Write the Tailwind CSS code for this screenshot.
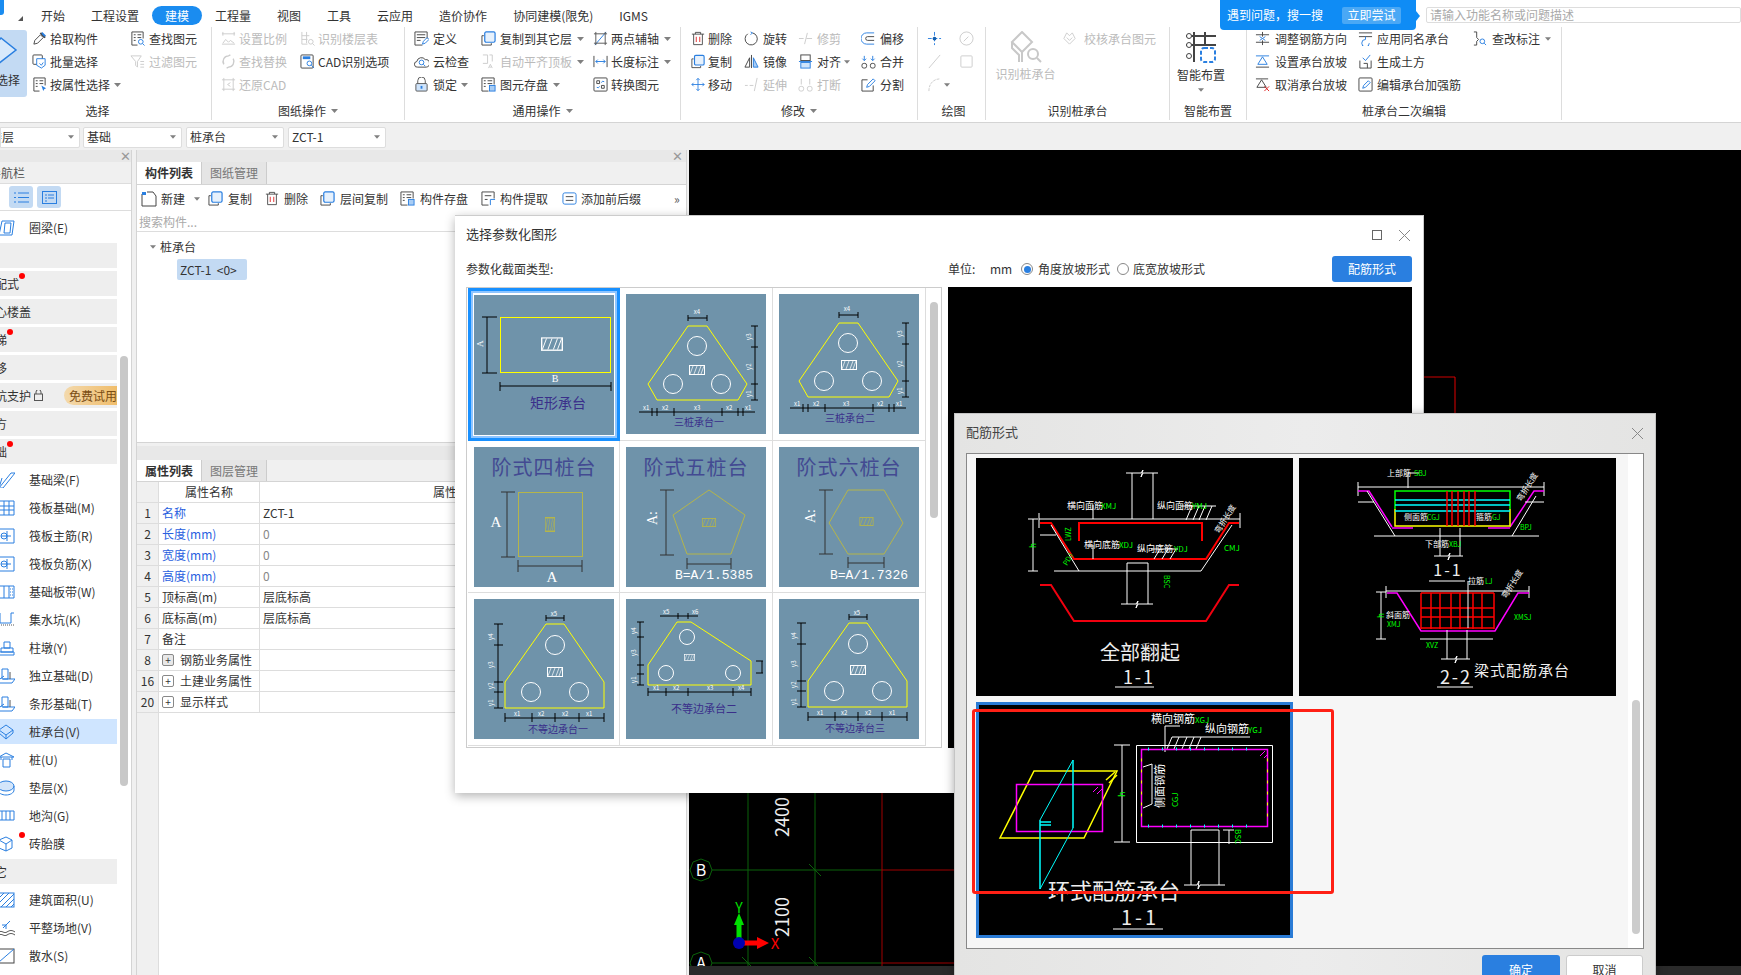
<!DOCTYPE html>
<html lang="zh-CN">
<head>
<meta charset="UTF-8">
<title>选择参数化图形</title>
<script src="https://cdn.jsdelivr.net/npm/@tailwindcss/browser@4"></script>
</head>
<body class="relative w-[1741px] h-[975px] overflow-hidden bg-[#f0f0f0] text-[12px] leading-none text-[#333] font-['Noto_Sans_CJK_SC','Liberation_Sans',sans-serif]">

<!-- 图标 -->
<svg class="absolute w-0 h-0">
  <symbol id="caret" viewBox="0 0 7 4"><path d="M0 0h7L3.500 4z" fill="#808080"/></symbol>
  <symbol id="hatch" viewBox="0 0 16 10"><rect x=".5" y=".5" width="15" height="9" fill="none" stroke="currentColor"/><path d="M1 9l3-8M5 9l3-8M9 9l3-8M12 9l3-8" stroke="currentColor" fill="none" stroke-width=".7"/></symbol>
  <symbol id="find" viewBox="0 0 16 16" fill="none"><path d="M8 15H2V1h12v7" stroke="currentColor"/><path d="M4 4h2M8 4h4M4 7h2M8 7h4M4 10h2" stroke="currentColor"/><circle cx="11.500" cy="11.500" r="2.500" stroke="#2a7fe0"/><path d="M13.500 13.500L15.500 15.500" stroke="#2a7fe0"/></symbol>
  <symbol id="pick" viewBox="0 0 16 16" fill="none"><path d="M2 14l1-4 6-6 3 3-6 6z" stroke="currentColor"/><path d="M9 2l5 5" stroke="#444" stroke-width="2"/><path d="M11 1l4 4-2 1-3-3z" fill="#2a7fe0"/></symbol>
  <symbol id="batch" viewBox="0 0 16 16" fill="none"><rect x="1" y="1" width="10" height="10" rx="1" stroke="currentColor"/><path d="M5 5h9v7l-4 3-5-3z" stroke="#2a7fe0" fill="#fff"/><path d="M8 10l2 2 2-3" stroke="#2a7fe0"/></symbol>
  <symbol id="attr" viewBox="0 0 16 16" fill="none"><path d="M8 15H2V1h12v8" stroke="currentColor"/><path d="M4 4h2M8 4h4M4 7h2M8 7h4M4 10h2" stroke="currentColor"/><path d="M10 9l5 3-2 1-1 2z" fill="#2a7fe0"/></symbol>
  <symbol id="filter" viewBox="0 0 16 16" fill="none"><path d="M1 2h11L8 8v6L6 12V8z" stroke="currentColor"/><path d="M11 8h4M11 11h4M11 14h4" stroke="currentColor"/></symbol>
  <symbol id="scale" viewBox="0 0 16 16" fill="none"><path d="M1 3h14M1 14h14M2 1v4M14 1v4" stroke="currentColor"/><path d="M2 13l3-4 3 3 2-2 4 3" stroke="currentColor"/></symbol>
  <symbol id="floor" viewBox="0 0 16 16" fill="none"><path d="M2 1v13h6M2 5h8M2 9h6M7 1v12" stroke="currentColor"/><circle cx="11.500" cy="11.500" r="2.500" stroke="currentColor"/><path d="M13.500 13.500L15.500 15.500" stroke="currentColor"/></symbol>
  <symbol id="replace" viewBox="0 0 16 16" fill="none"><path d="M3 11A6 6 0 0 1 8 2l2-1M13 5a6 6 0 0 1-5 9l-2 1" stroke="currentColor" stroke-width="1.500"/></symbol>
  <symbol id="restore" viewBox="0 0 16 16" fill="none"><path d="M1 3h14M1 13h14M3 1v14M13 1v14" stroke="currentColor"/><path d="M10 6L7 8l3 2" stroke="currentColor"/></symbol>
  <symbol id="cad" viewBox="0 0 16 16" fill="none"><rect x="1" y="1" width="13" height="14" rx="1" stroke="currentColor"/><path d="M3 4h8" stroke="#2a7fe0" stroke-width="3"/><circle cx="10" cy="10" r="2.500" stroke="#2a7fe0"/><path d="M12 12l3 3" stroke="#2a7fe0"/></symbol>
  <symbol id="define" viewBox="0 0 16 16" fill="none"><path d="M9 15H1V1h13v7" stroke="currentColor"/><path d="M3 4h9M3 7h9M3 10h4" stroke="currentColor"/><path d="M9 14l1-3 4-4 2 2-4 4z" stroke="#2a7fe0"/></symbol>
  <symbol id="cloud" viewBox="0 0 16 16" fill="none"><path d="M4 14a3 3 0 0 1-1-6 5 5 0 0 1 9-2 4 4 0 0 1 1 8z" stroke="currentColor"/><circle cx="8" cy="9" r="2.500" stroke="#2a7fe0"/><path d="M10 11l2 2" stroke="#2a7fe0"/></symbol>
  <symbol id="lock" viewBox="0 0 16 16" fill="none"><path d="M4 7V4a4 4 0 0 1 8 0v3" stroke="currentColor"/><rect x="2" y="7" width="12" height="8" rx="1" fill="#cfe4fb" stroke="#555"/><path d="M8 9.500v3" stroke="#2a7fe0" stroke-width="2"/></symbol>
  <symbol id="copy" viewBox="0 0 16 16" fill="none"><path d="M3 5H1v10h10v-2" stroke="currentColor"/><rect x="4" y="1" width="11" height="11" rx="1.500" fill="#e7f1fc" stroke="#2a7fe0" stroke-width="1.300"/></symbol>
  <symbol id="auto" viewBox="0 0 16 16" fill="none"><path d="M2 1h5v9H2M9 1h3v7" stroke="currentColor"/><path d="M8 15l2-4 2 4M9 14h2" stroke="currentColor"/></symbol>
  <symbol id="save" viewBox="0 0 16 16" fill="none"><path d="M8 15H1V1h13v7" stroke="currentColor"/><path d="M3 4h2M7 4h5M3 7h2M7 7h5M3 10h2" stroke="currentColor"/><rect x="9" y="9" width="6" height="6" fill="#a9cdf4" stroke="#2a7fe0"/></symbol>
  <symbol id="axis" viewBox="0 0 16 16" fill="none"><path d="M2 15L14 1" stroke="#2a7fe0"/><path d="M1 3h14M1 13h14M3 1v14M13 1v14" stroke="#555"/></symbol>
  <symbol id="dim" viewBox="0 0 16 16" fill="none"><path d="M1 2v12M15 2v12" stroke="#444"/><path d="M3 8h10M3 8l2-2M3 8l2 2M13 8l-2-2M13 8l-2 2" stroke="#2a7fe0"/></symbol>
  <symbol id="convert" viewBox="0 0 16 16" fill="none"><rect x="1" y="1" width="14" height="14" rx="1" stroke="currentColor"/><path d="M4 4h3v3H4zM9 9h3v3H9z" stroke="#444"/><path d="M9 6a2 2 0 0 1 3-1M7 10a2 2 0 0 1-3 1" stroke="#2a7fe0"/></symbol>
  <symbol id="del" viewBox="0 0 16 16" fill="none"><path d="M1 3h14M5 3V1h6v2M3 3v12h10V3" stroke="currentColor"/><path d="M6 6v6M10 6v6" stroke="#e02020"/></symbol>
  <symbol id="rotate" viewBox="0 0 16 16" fill="none"><path d="M9 2a6.500 6.500 0 1 1-5 1" stroke="currentColor"/><path d="M7 1l2 1-2 2" stroke="#2a7fe0"/></symbol>
  <symbol id="trim" viewBox="0 0 16 16" fill="none"><path d="M1 8h5M9 8h6M10 2L7 14" stroke="currentColor"/></symbol>
  <symbol id="offset" viewBox="0 0 16 16" fill="none"><path d="M14 2H6a6 6 0 0 0 0 12h8" stroke="#2a7fe0"/><path d="M14 6H7a2 2 0 0 0 0 4h7" stroke="#444"/></symbol>
  <symbol id="mirror" viewBox="0 0 16 16" fill="none"><path d="M8 1v14" stroke="#444"/><path d="M6 4L1 14h5z" stroke="#444"/><path d="M10 4l5 10h-5z" fill="#a9cdf4" stroke="#2a7fe0"/></symbol>
  <symbol id="align" viewBox="0 0 16 16" fill="none"><rect x="3" y="1" width="10" height="6" stroke="#444"/><rect x="3" y="9" width="10" height="6" fill="#cfe4fb" stroke="#2a7fe0"/><path d="M1 8h14" stroke="#2a7fe0"/></symbol>
  <symbol id="merge" viewBox="0 0 16 16" fill="none"><rect x="1" y="10" width="5" height="5" rx="2" stroke="#444"/><rect x="10" y="10" width="5" height="5" rx="2" stroke="#444"/><path d="M3.500 2v5M1.500 5l2 2 2-2M12.500 2v5M10.500 5l2 2 2-2" stroke="#2a7fe0"/></symbol>
  <symbol id="move" viewBox="0 0 16 16" fill="none"><path d="M8 1v14M1 8h14M8 1L6 3M8 1l2 2M8 15l-2-2M8 15l2-2M1 8l2-2M1 8l2 2M15 8l-2-2M15 8l-2 2" stroke="#2a7fe0"/></symbol>
  <symbol id="extend" viewBox="0 0 16 16" fill="none"><path d="M1 9h3M6 9h4M11 15l3-14" stroke="currentColor"/></symbol>
  <symbol id="break" viewBox="0 0 16 16" fill="none"><rect x="1" y="10" width="5" height="5" rx="2" stroke="currentColor"/><rect x="10" y="10" width="5" height="5" rx="2" stroke="currentColor"/><path d="M3.500 2v6M12.500 2v6" stroke="currentColor"/></symbol>
  <symbol id="split" viewBox="0 0 16 16" fill="none"><path d="M7 3H1v12h12V9" stroke="#444"/><path d="M6 11l1-3 6-6 2 2-6 6z" stroke="#2a7fe0"/></symbol>
  <symbol id="node" viewBox="0 0 16 16" fill="none"><path d="M8 1v14M1 8h14" stroke="#2a7fe0" stroke-dasharray="4 2"/><circle cx="8" cy="8" r="2" fill="#1560b0"/></symbol>
  <symbol id="clock" viewBox="0 0 16 16" fill="none"><circle cx="8" cy="8" r="7" stroke="currentColor"/><path d="M5 11l5-5" stroke="currentColor"/></symbol>
  <symbol id="line" viewBox="0 0 16 16" fill="none"><path d="M2 15L14 1" stroke="currentColor"/></symbol>
  <symbol id="square" viewBox="0 0 16 16" fill="none"><rect x="2" y="2" width="12" height="12" rx="1" stroke="currentColor"/></symbol>
  <symbol id="arc" viewBox="0 0 16 16" fill="none"><path d="M2 15C2 7 7 2 14 2" stroke="currentColor" stroke-dasharray="3 1"/></symbol>
  <symbol id="check" viewBox="0 0 16 16" fill="none"><path d="M8 14L2 8l3-6 3 3 3-3 3 6z" stroke="currentColor"/><path d="M5 7l3 3 3-3" stroke="currentColor"/></symbol>
  <symbol id="rebar" viewBox="0 0 16 16" fill="none"><path d="M1 4h14M1 12h14M8 1v5M8 10v5" stroke="#444"/><path d="M5 6l3 2 3-2M5 10l3-2 3 2" stroke="#2a7fe0"/></symbol>
  <symbol id="same" viewBox="0 0 16 16" fill="none"><path d="M1 2h14M1 6h14" stroke="#444"/><path d="M8 6v3M8 9a4 4 0 1 0 4 4" stroke="#2a7fe0"/></symbol>
  <symbol id="slope" viewBox="0 0 16 16" fill="none"><path d="M1 2h14M8 3L3 11h10z" stroke="#2a7fe0"/><path d="M1 14h14" stroke="#444"/></symbol>
  <symbol id="unslope" viewBox="0 0 16 16" fill="none"><path d="M1 2h13M7 3L2 11h10z" stroke="#444"/><path d="M10 10l5 5M15 10l-5 5" stroke="#e02020"/></symbol>
  <symbol id="earth" viewBox="0 0 16 16" fill="none"><path d="M2 7v8h12V7" stroke="#444"/><path d="M6 10h4v5" stroke="#444"/><path d="M5 4l3 3 5-6" stroke="#2a7fe0"/></symbol>
  <symbol id="edit" viewBox="0 0 16 16" fill="none"><rect x="1" y="1" width="14" height="14" rx="1" stroke="#444"/><path d="M5 12l1-3 5-5 2 2-5 5z" stroke="#2a7fe0"/></symbol>
  <symbol id="mark" viewBox="0 0 16 16" fill="none"><path d="M2 1h3v6l2 2-2 2v4H2" stroke="#444"/><circle cx="11" cy="11" r="2.500" stroke="#2a7fe0"/><path d="M13 13l2 2" stroke="#2a7fe0"/></symbol>
  <symbol id="new" viewBox="0 0 16 16" fill="none"><path d="M1 3v12h14V5l-3-4H6" stroke="#444"/><path d="M1 1h4v3H1z" fill="#2a7fe0"/></symbol>
  <symbol id="prefix" viewBox="0 0 16 16" fill="none"><rect x="1" y="2" width="14" height="12" rx="2" stroke="#2a7fe0"/><path d="M4 6h8M4 10h8" stroke="#444"/></symbol>
  <symbol id="extract" viewBox="0 0 16 16" fill="none"><path d="M8 15H1V1h13v7" stroke="#444"/><path d="M4 5h7M4 9h3" stroke="#444"/><path d="M10 15V9h5" stroke="#2a7fe0"/></symbol>
  <symbol id="s-beam" viewBox="0 0 16 16" fill="none"><path d="M0 16L12 1h4L4 16zM0 16L3 6" stroke="#2a7fe0"/></symbol>
  <symbol id="s-raft" viewBox="0 0 16 16" fill="none"><path d="M0 1h15v14H0zM0 6h15M0 10h15M5 1v14M10 1v14" stroke="#2a7fe0"/></symbol>
  <symbol id="s-main" viewBox="0 0 16 16" fill="none"><path d="M0 1h15v14H0" stroke="#2a7fe0"/><path d="M2 8h10M8 3v10" stroke="#2a7fe0"/><circle cx="5" cy="8" r="3" stroke="#2a7fe0"/></symbol>
  <symbol id="s-strip" viewBox="0 0 16 16" fill="none"><path d="M0 2h15v12H0zM5 2v12M10 2v12" stroke="#2a7fe0"/><path d="M11 5h3M11 8h3M11 11h3" stroke="#2a7fe0" stroke-dasharray="1 1"/></symbol>
  <symbol id="s-pit" viewBox="0 0 16 16" fill="none"><path d="M1 1v10h11V1h3" stroke="#2a7fe0"/><path d="M0 13h15" stroke="#555" stroke-dasharray="1 1"/></symbol>
  <symbol id="s-pier" viewBox="0 0 16 16" fill="none"><path d="M5 2h6v6H5zM2 8h12v4H2zM0 12h15v3H0z" stroke="#2a7fe0"/></symbol>
  <symbol id="s-ind" viewBox="0 0 16 16" fill="none"><path d="M3 1h6v10H3zM1 11l4-3M0 15h13l3-4H4" stroke="#2a7fe0"/><path d="M11 4v7" stroke="#555"/></symbol>
  <symbol id="s-cap" viewBox="0 0 16 16" fill="none"><path d="M7 1l7 5-7 5-7-5zM0 6v3l7 6 7-6V6M7 11v4" stroke="#2a7fe0"/></symbol>
  <symbol id="s-pile" viewBox="0 0 16 16" fill="none"><path d="M7 1l8 4H0zM2 5v3M13 5v3M4 7h7v8H4z" stroke="#2a7fe0"/></symbol>
  <symbol id="s-pad" viewBox="0 0 16 16" fill="none"><ellipse cx="7" cy="6" rx="8" ry="5" fill="#d3e5fa" stroke="#2a7fe0"/><path d="M-1 6v4c0 3 4 5 8 5s8-2 8-5V6" stroke="#2a7fe0"/></symbol>
  <symbol id="s-trench" viewBox="0 0 16 16" fill="none"><path d="M0 3h15M0 12h15M3 3v9M7 3v9M11 3v9M15 3v9" stroke="#2a7fe0"/></symbol>
  <symbol id="s-brick" viewBox="0 0 16 16" fill="none"><path d="M7 1l6 3v8l-6 3-7-3V4zM0 4l7 4 6-4M7 8v7" stroke="#2a7fe0"/></symbol>
  <symbol id="s-area" viewBox="0 0 16 16" fill="none"><rect x="0" y="1" width="15" height="14" stroke="#2a7fe0"/><path d="M0 6l5-5M0 11l10-10M2 15L15 2M7 15l8-8M12 15l3-3" stroke="#2a7fe0"/></symbol>
  <symbol id="s-level" viewBox="0 0 16 16" fill="none"><path d="M4 8l7-7M3 5h4v4" stroke="#2a7fe0"/><path d="M0 12c3-2 5 2 8 0s5-2 8 0M0 15c3-2 5 2 8 0s5-2 8 0" stroke="#555"/></symbol>
  <symbol id="s-apron" viewBox="0 0 16 16" fill="none"><rect x="0" y="1" width="15" height="14" stroke="#444"/><path d="M0 14L15 1" stroke="#2a7fe0"/></symbol>
  <symbol id="s-ring" viewBox="0 0 16 16" fill="none"><path d="M3 1h12l-2 14H0z" stroke="#2a7fe0"/><path d="M6 3h6l-1 10H5z" stroke="#2a7fe0"/></symbol>
</svg>

<!-- 标签栏 -->
<div class="flex items-end h-[25px] pl-[41px] gap-[26px] bg-white relative">
  <div class="absolute left-0 top-0 w-[4px] h-[15px] bg-[#1a8cf0] rounded-br-[3px]"></div>
  <div class="absolute left-[18px] top-[16px] w-0 h-0 border-l-[5px] border-l-transparent border-b-[5px] border-b-[#555]"></div>
  <span class="h-[19px] flex items-center">开始</span>
  <span class="h-[19px] flex items-center">工程设置</span>
  <span class="h-[19px] flex items-center bg-[#1a8cf0] text-white rounded-full px-[13px] -mx-[13px]">建模</span>
  <span class="h-[19px] flex items-center">工程量</span>
  <span class="h-[19px] flex items-center">视图</span>
  <span class="h-[19px] flex items-center">工具</span>
  <span class="h-[19px] flex items-center">云应用</span>
  <span class="h-[19px] flex items-center">造价协作</span>
  <span class="h-[19px] flex items-center">协同建模(限免)</span>
  <span class="h-[19px] flex items-center">IGMS</span>
</div>

<!-- 功能区 -->
<div class="flex h-[98px] bg-white border-b border-[#d4d4d4] pt-[2px]">
  <!-- 选择 -->
  <div class="w-[212px] h-[93px] border-r border-[#ddd] flex flex-col shrink-0">
    <div class="flex h-[69px]">
      <div class="w-[27px] h-[67px] mt-[3px] bg-[#c3daf3] rounded-r-[3px] overflow-hidden relative">
        <svg class="absolute left-[-14px] top-[6px] w-[32px] h-[30px]" viewBox="0 0 32 30" fill="none"><path d="M15 2L2 16h10v12l18-14z" fill="#d8e9fb" stroke="#2a7fe0" stroke-width="1.500"/></svg>
        <span class="absolute left-[-4px] top-[44px] whitespace-nowrap">选择</span>
      </div>
      <div class="ml-[5px] w-[98px] flex flex-col">
        <div class="h-[23px] flex items-center"><span class="w-[18px]"><svg class="w-[15px] h-[15px] text-[#444]"><use href="#pick"/></svg></span>拾取构件</div>
        <div class="h-[23px] flex items-center"><span class="w-[18px]"><svg class="w-[15px] h-[15px] text-[#444]"><use href="#batch"/></svg></span>批量选择</div>
        <div class="h-[23px] flex items-center"><span class="w-[18px]"><svg class="w-[15px] h-[15px] text-[#444]"><use href="#attr"/></svg></span>按属性选择<svg class="w-[7px] h-[4px] ml-[4px]"><use href="#caret"/></svg></div>
      </div>
      <div class="flex flex-col">
        <div class="h-[23px] flex items-center"><span class="w-[19px]"><svg class="w-[15px] h-[15px] text-[#444]"><use href="#find"/></svg></span>查找图元</div>
        <div class="h-[23px] flex items-center text-[#bbb]"><span class="w-[19px]"><svg class="w-[15px] h-[15px] text-[#ccc]"><use href="#filter"/></svg></span>过滤图元</div>
      </div>
    </div>
    <div class="mt-[5px] h-[19px] flex items-center justify-center pr-[16px]">选择</div>
  </div>
  <!-- 图纸操作 -->
  <div class="w-[193px] h-[93px] border-r border-[#ddd] flex flex-col shrink-0">
    <div class="flex h-[69px] pl-[9px]">
      <div class="w-[79px] flex flex-col text-[#bbb]">
        <div class="h-[23px] flex items-center"><span class="w-[18px]"><svg class="w-[15px] h-[15px] text-[#ccc]"><use href="#scale"/></svg></span>设置比例</div>
        <div class="h-[23px] flex items-center"><span class="w-[18px]"><svg class="w-[15px] h-[15px] text-[#ccc]"><use href="#replace"/></svg></span>查找替换</div>
        <div class="h-[23px] flex items-center"><span class="w-[18px]"><svg class="w-[15px] h-[15px] text-[#ccc]"><use href="#restore"/></svg></span>还原CAD</div>
      </div>
      <div class="flex flex-col">
        <div class="h-[23px] flex items-center text-[#bbb]"><span class="w-[18px]"><svg class="w-[15px] h-[15px] text-[#ccc]"><use href="#floor"/></svg></span>识别楼层表</div>
        <div class="h-[23px] flex items-center"><span class="w-[18px]"><svg class="w-[15px] h-[15px] text-[#444]"><use href="#cad"/></svg></span>CAD识别选项</div>
      </div>
    </div>
    <div class="mt-[5px] h-[19px] flex items-center justify-center">图纸操作<svg class="w-[7px] h-[4px] ml-[5px]"><use href="#caret"/></svg></div>
  </div>
  <!-- 通用操作 -->
  <div class="w-[276px] h-[93px] border-r border-[#ddd] flex flex-col shrink-0">
    <div class="flex h-[69px] pl-[9px]">
      <div class="w-[67px] flex flex-col">
        <div class="h-[23px] flex items-center"><span class="w-[19px]"><svg class="w-[15px] h-[15px] text-[#444]"><use href="#define"/></svg></span>定义</div>
        <div class="h-[23px] flex items-center"><span class="w-[19px]"><svg class="w-[15px] h-[15px] text-[#444]"><use href="#cloud"/></svg></span>云检查</div>
        <div class="h-[23px] flex items-center"><span class="w-[19px]"><svg class="w-[15px] h-[15px] text-[#555]"><use href="#lock"/></svg></span>锁定<svg class="w-[7px] h-[4px] ml-[4px]"><use href="#caret"/></svg></div>
      </div>
      <div class="w-[112px] flex flex-col">
        <div class="h-[23px] flex items-center"><span class="w-[19px]"><svg class="w-[15px] h-[15px] text-[#444]"><use href="#copy"/></svg></span>复制到其它层<svg class="w-[7px] h-[4px] ml-[5px]"><use href="#caret"/></svg></div>
        <div class="h-[23px] flex items-center text-[#bbb]"><span class="w-[19px]"><svg class="w-[15px] h-[15px] text-[#ccc]"><use href="#auto"/></svg></span>自动平齐顶板<svg class="w-[7px] h-[4px] ml-[5px]"><use href="#caret"/></svg></div>
        <div class="h-[23px] flex items-center"><span class="w-[19px]"><svg class="w-[15px] h-[15px] text-[#444]"><use href="#save"/></svg></span>图元存盘<svg class="w-[7px] h-[4px] ml-[5px]"><use href="#caret"/></svg></div>
      </div>
      <div class="flex flex-col">
        <div class="h-[23px] flex items-center"><span class="w-[18px]"><svg class="w-[15px] h-[15px]"><use href="#axis"/></svg></span>两点辅轴<svg class="w-[7px] h-[4px] ml-[5px]"><use href="#caret"/></svg></div>
        <div class="h-[23px] flex items-center"><span class="w-[18px]"><svg class="w-[15px] h-[15px]"><use href="#dim"/></svg></span>长度标注<svg class="w-[7px] h-[4px] ml-[5px]"><use href="#caret"/></svg></div>
        <div class="h-[23px] flex items-center"><span class="w-[18px]"><svg class="w-[15px] h-[15px] text-[#444]"><use href="#convert"/></svg></span>转换图元</div>
      </div>
    </div>
    <div class="mt-[5px] h-[19px] flex items-center justify-center">通用操作<svg class="w-[7px] h-[4px] ml-[5px]"><use href="#caret"/></svg></div>
  </div>
  <!-- 修改 -->
  <div class="w-[237px] h-[93px] border-r border-[#ddd] flex flex-col shrink-0">
    <div class="flex h-[69px] pl-[10px]">
      <div class="w-[53px] flex flex-col">
        <div class="h-[23px] flex items-center"><span class="w-[17px]"><svg class="w-[14px] h-[15px] text-[#444]"><use href="#del"/></svg></span>删除</div>
        <div class="h-[23px] flex items-center"><span class="w-[17px]"><svg class="w-[14px] h-[15px] text-[#444]"><use href="#copy"/></svg></span>复制</div>
        <div class="h-[23px] flex items-center"><span class="w-[17px]"><svg class="w-[14px] h-[15px]"><use href="#move"/></svg></span>移动</div>
      </div>
      <div class="w-[54px] flex flex-col">
        <div class="h-[23px] flex items-center"><span class="w-[19px]"><svg class="w-[15px] h-[15px] text-[#444]"><use href="#rotate"/></svg></span>旋转</div>
        <div class="h-[23px] flex items-center"><span class="w-[19px]"><svg class="w-[15px] h-[15px]"><use href="#mirror"/></svg></span>镜像</div>
        <div class="h-[23px] flex items-center text-[#bbb]"><span class="w-[19px]"><svg class="w-[15px] h-[15px] text-[#ccc]"><use href="#extend"/></svg></span>延伸</div>
      </div>
      <div class="w-[63px] flex flex-col">
        <div class="h-[23px] flex items-center text-[#bbb]"><span class="w-[19px]"><svg class="w-[15px] h-[15px] text-[#ccc]"><use href="#trim"/></svg></span>修剪</div>
        <div class="h-[23px] flex items-center"><span class="w-[19px]"><svg class="w-[15px] h-[15px]"><use href="#align"/></svg></span>对齐<svg class="w-[6px] h-[4px] ml-[3px]"><use href="#caret"/></svg></div>
        <div class="h-[23px] flex items-center text-[#bbb]"><span class="w-[19px]"><svg class="w-[15px] h-[15px] text-[#ccc]"><use href="#break"/></svg></span>打断</div>
      </div>
      <div class="flex flex-col">
        <div class="h-[23px] flex items-center"><span class="w-[19px]"><svg class="w-[15px] h-[15px]"><use href="#offset"/></svg></span>偏移</div>
        <div class="h-[23px] flex items-center"><span class="w-[19px]"><svg class="w-[15px] h-[15px]"><use href="#merge"/></svg></span>合并</div>
        <div class="h-[23px] flex items-center"><span class="w-[19px]"><svg class="w-[15px] h-[15px]"><use href="#split"/></svg></span>分割</div>
      </div>
    </div>
    <div class="mt-[5px] h-[19px] flex items-center justify-center">修改<svg class="w-[7px] h-[4px] ml-[5px]"><use href="#caret"/></svg></div>
  </div>
  <!-- 绘图 -->
  <div class="w-[68px] h-[93px] border-r border-[#ddd] flex flex-col shrink-0">
    <div class="flex h-[69px] pl-[9px]">
      <div class="w-[32px] flex flex-col">
        <div class="h-[23px] flex items-center"><svg class="w-[15px] h-[15px]"><use href="#node"/></svg></div>
        <div class="h-[23px] flex items-center"><svg class="w-[15px] h-[15px] text-[#ccc]"><use href="#line"/></svg></div>
        <div class="h-[23px] flex items-center"><svg class="w-[15px] h-[15px] text-[#ccc]"><use href="#arc"/></svg><svg class="w-[6px] h-[4px] ml-[2px]"><use href="#caret"/></svg></div>
      </div>
      <div class="flex flex-col">
        <div class="h-[23px] flex items-center"><svg class="w-[15px] h-[15px] text-[#ccc]"><use href="#clock"/></svg></div>
        <div class="h-[23px] flex items-center"><svg class="w-[15px] h-[15px] text-[#ccc]"><use href="#square"/></svg></div>
      </div>
    </div>
    <div class="mt-[5px] h-[19px] flex items-center justify-center pl-[4px]">绘图</div>
  </div>
  <!-- 识别桩承台 -->
  <div class="w-[184px] h-[93px] border-r border-[#ddd] flex flex-col shrink-0">
    <div class="flex h-[69px] pl-[9px]">
      <div class="w-[61px] flex flex-col items-center text-[#bbb]">
        <svg class="w-[32px] h-[32px] mt-[4px] mb-[5px]" viewBox="0 0 32 32" fill="none"><path d="M12 1l10 10-10 10L2 11z" stroke="#c8c8c8" stroke-width="2"/><path d="M2 11v6l7 7v7M12 21v10" stroke="#c8c8c8" stroke-width="2"/><circle cx="23" cy="23" r="5" stroke="#c8c8c8" stroke-width="2"/><path d="M27 27l4 4" stroke="#c8c8c8" stroke-width="2"/></svg>
        <span class="whitespace-nowrap">识别桩承台</span>
      </div>
      <div class="ml-[6px] h-[23px] flex items-center text-[#bbb]"><span class="w-[22px]"><svg class="w-[15px] h-[15px] text-[#ccc]"><use href="#check"/></svg></span>校核承台图元</div>
    </div>
    <div class="mt-[5px] h-[19px] flex items-center justify-center">识别桩承台</div>
  </div>
  <!-- 智能布置 -->
  <div class="w-[77px] h-[93px] border-r border-[#ddd] flex flex-col shrink-0">
    <div class="flex flex-col items-center h-[69px] pr-[14px]">
      <svg class="w-[32px] h-[32px] mt-[4px] mb-[6px]" viewBox="0 0 32 32" fill="none"><path d="M1 5h30M1 14h30M9 1v30M20 1v12" stroke="#444" stroke-width="2"/><circle cx="4" cy="5" r="2.500" fill="#fff" stroke="#444"/><circle cx="4" cy="14" r="2.500" fill="#fff" stroke="#444"/><circle cx="4" cy="25" r="2.500" fill="#fff" stroke="#444"/><rect x="16" y="17" width="14" height="14" rx="3" fill="#fff" stroke="#2a7fe0" stroke-width="2" stroke-dasharray="4 2"/></svg>
      <span class="whitespace-nowrap">智能布置</span>
      <svg class="w-[6px] h-[4px] mt-[7px]"><use href="#caret"/></svg>
    </div>
    <div class="mt-[5px] h-[19px] flex items-center justify-center">智能布置</div>
  </div>
  <!-- 桩承台二次编辑 -->
  <div class="w-[315px] h-[93px] border-r border-[#ddd] flex flex-col shrink-0">
    <div class="flex h-[69px] pl-[8px]">
      <div class="w-[103px] flex flex-col">
        <div class="h-[23px] flex items-center"><span class="w-[20px]"><svg class="w-[15px] h-[15px]"><use href="#rebar"/></svg></span>调整钢筋方向</div>
        <div class="h-[23px] flex items-center"><span class="w-[20px]"><svg class="w-[15px] h-[15px]"><use href="#slope"/></svg></span>设置承台放坡</div>
        <div class="h-[23px] flex items-center"><span class="w-[20px]"><svg class="w-[15px] h-[15px]"><use href="#unslope"/></svg></span>取消承台放坡</div>
      </div>
      <div class="w-[114px] flex flex-col">
        <div class="h-[23px] flex items-center"><span class="w-[19px]"><svg class="w-[15px] h-[15px]"><use href="#same"/></svg></span>应用同名承台</div>
        <div class="h-[23px] flex items-center"><span class="w-[19px]"><svg class="w-[15px] h-[15px]"><use href="#earth"/></svg></span>生成土方</div>
        <div class="h-[23px] flex items-center whitespace-nowrap"><span class="w-[19px]"><svg class="w-[15px] h-[15px]"><use href="#edit"/></svg></span>编辑承台加强筋</div>
      </div>
      <div class="flex flex-col">
        <div class="h-[23px] flex items-center"><span class="w-[20px]"><svg class="w-[15px] h-[15px]"><use href="#mark"/></svg></span>查改标注<svg class="w-[6px] h-[4px] ml-[5px]"><use href="#caret"/></svg></div>
      </div>
    </div>
    <div class="mt-[5px] h-[19px] flex items-center justify-center">桩承台二次编辑</div>
  </div>
</div>

<!-- 下拉条 -->
<div class="flex h-[27px] items-center pt-[1px] gap-[3px] bg-[#f0f0f0]">
  <div class="w-[80px] h-[21px] bg-white border border-[#ddd] rounded-r-[2px] flex items-center justify-between pr-[5px] overflow-hidden"><span class="-ml-[11px]">楼层</span><svg class="w-[6px] h-[4px]"><use href="#caret"/></svg></div>
  <div class="w-[99px] h-[21px] bg-white border border-[#ddd] rounded-[2px] flex items-center justify-between px-[3px] pr-[5px]"><span>基础</span><svg class="w-[6px] h-[4px]"><use href="#caret"/></svg></div>
  <div class="w-[98px] h-[21px] ml-[1px] bg-white border border-[#ddd] rounded-[2px] flex items-center justify-between px-[3px] pr-[5px]"><span>桩承台</span><svg class="w-[6px] h-[4px]"><use href="#caret"/></svg></div>
  <div class="w-[98px] h-[21px] ml-[1px] bg-white border border-[#ddd] rounded-[2px] flex items-center justify-between px-[3px] pr-[5px]"><span>ZCT-1</span><svg class="w-[6px] h-[4px]"><use href="#caret"/></svg></div>
</div>

<!-- 主体 -->
<div class="flex h-[825px] bg-[#f0f0f0]">
  <!-- 导航栏 -->
  <div class="w-[132px] h-full bg-white border-r border-[#d4d4d4] shrink-0 flex flex-col overflow-hidden relative">
    <div class="h-[12px] bg-[#e8e8e8] relative shrink-0"><span class="absolute left-[120px] top-[-1px] text-[#999] text-[13px]">✕</span></div>
    <div class="h-[22px] bg-[#f0f0f0] border-b border-[#ddd] flex items-center shrink-0"><span class="-ml-[11px] text-[#555]">导航栏</span></div>
    <div class="h-[27px] border-b border-[#ddd] flex items-center pl-[9px] gap-[4px] shrink-0">
      <div class="w-[24px] h-[22px] bg-[#c3daf3] rounded-[3px] flex items-center justify-center"><svg class="w-[15px] h-[13px]" viewBox="0 0 15 13" fill="none" stroke="#2a7fe0"><path d="M4 2h11M4 6.500h11M4 11h11M0 2h2M0 6.500h2M0 11h2"/></svg></div>
      <div class="w-[24px] h-[22px] bg-[#c3daf3] rounded-[3px] flex items-center justify-center"><svg class="w-[15px] h-[13px]" viewBox="0 0 15 13" fill="none" stroke="#2a7fe0"><rect x=".5" y=".5" width="14" height="12"/><path d="M3 4h2M6 4h6M3 7h2M6 7h6M3 10h2"/></svg></div>
    </div>
    <div class="w-[117px] pt-[4px] flex flex-col gap-[3px]">
      <div class="h-[25px] flex items-center"><svg class="w-[16px] h-[16px] -ml-[1px] mr-[14px] shrink-0"><use href="#s-ring"/></svg>圈梁(E)</div>
      <div class="h-[25px] bg-[#eee]"></div>
      <div class="h-[25px] bg-[#eee] flex items-center relative"><span class="-ml-[17px] whitespace-nowrap">装配式</span><i class="absolute left-[19px] top-[2px] w-[6px] h-[6px] rounded-full bg-[#f00]"></i></div>
      <div class="h-[25px] bg-[#eee] flex items-center"><span class="-ml-[17px] whitespace-nowrap">空心楼盖</span></div>
      <div class="h-[25px] bg-[#eee] flex items-center relative"><span class="-ml-[17px] whitespace-nowrap">楼梯</span><i class="absolute left-[7px] top-[2px] w-[6px] h-[6px] rounded-full bg-[#f00]"></i></div>
      <div class="h-[25px] bg-[#eee] flex items-center"><span class="-ml-[17px] whitespace-nowrap">平移</span></div>
      <div class="h-[25px] bg-[#eee] flex items-center relative"><span class="-ml-[17px] whitespace-nowrap">基坑支护</span><svg class="w-[9px] h-[11px] ml-[3px]" viewBox="0 0 9 11" fill="none" stroke="#555"><path d="M2 4V2a2.500 2.500 0 0 1 5 0v2"/><rect x=".5" y="4" width="8" height="6.500"/></svg><span class="ml-auto w-[53px] h-[19px] rounded-l-full bg-linear-to-r from-[#f3d9ac] to-[#f0bd6a] text-[#7a4d14] flex items-center justify-end whitespace-nowrap">免费试用</span></div>
      <div class="h-[25px] bg-[#eee] flex items-center"><span class="-ml-[17px] whitespace-nowrap">土方</span></div>
      <div class="h-[25px] bg-[#eee] flex items-center relative"><span class="-ml-[17px] whitespace-nowrap">基础</span><i class="absolute left-[7px] top-[2px] w-[6px] h-[6px] rounded-full bg-[#f00]"></i></div>
      <div class="h-[25px] flex items-center"><svg class="w-[16px] h-[16px] -ml-[1px] mr-[14px] shrink-0"><use href="#s-beam"/></svg>基础梁(F)</div>
      <div class="h-[25px] flex items-center"><svg class="w-[16px] h-[16px] -ml-[1px] mr-[14px] shrink-0"><use href="#s-raft"/></svg>筏板基础(M)</div>
      <div class="h-[25px] flex items-center"><svg class="w-[16px] h-[16px] -ml-[1px] mr-[14px] shrink-0"><use href="#s-main"/></svg>筏板主筋(R)</div>
      <div class="h-[25px] flex items-center"><svg class="w-[16px] h-[16px] -ml-[1px] mr-[14px] shrink-0"><use href="#s-main"/></svg>筏板负筋(X)</div>
      <div class="h-[25px] flex items-center"><svg class="w-[16px] h-[16px] -ml-[1px] mr-[14px] shrink-0"><use href="#s-strip"/></svg>基础板带(W)</div>
      <div class="h-[25px] flex items-center"><svg class="w-[16px] h-[16px] -ml-[1px] mr-[14px] shrink-0"><use href="#s-pit"/></svg>集水坑(K)</div>
      <div class="h-[25px] flex items-center"><svg class="w-[16px] h-[16px] -ml-[1px] mr-[14px] shrink-0"><use href="#s-pier"/></svg>柱墩(Y)</div>
      <div class="h-[25px] flex items-center"><svg class="w-[16px] h-[16px] -ml-[1px] mr-[14px] shrink-0"><use href="#s-ind"/></svg>独立基础(D)</div>
      <div class="h-[25px] flex items-center"><svg class="w-[16px] h-[16px] -ml-[1px] mr-[14px] shrink-0"><use href="#s-ind"/></svg>条形基础(T)</div>
      <div class="h-[25px] flex items-center bg-[#cfe5ff]"><svg class="w-[16px] h-[16px] -ml-[1px] mr-[14px] shrink-0"><use href="#s-cap"/></svg>桩承台(V)</div>
      <div class="h-[25px] flex items-center"><svg class="w-[16px] h-[16px] -ml-[1px] mr-[14px] shrink-0"><use href="#s-pile"/></svg>桩(U)</div>
      <div class="h-[25px] flex items-center"><svg class="w-[16px] h-[16px] -ml-[1px] mr-[14px] shrink-0"><use href="#s-pad"/></svg>垫层(X)</div>
      <div class="h-[25px] flex items-center"><svg class="w-[16px] h-[16px] -ml-[1px] mr-[14px] shrink-0"><use href="#s-trench"/></svg>地沟(G)</div>
      <div class="h-[25px] flex items-center relative"><svg class="w-[16px] h-[16px] -ml-[1px] mr-[14px] shrink-0"><use href="#s-brick"/></svg>砖胎膜<i class="absolute left-[19px] top-[1px] w-[6px] h-[6px] rounded-full bg-[#f00]"></i></div>
      <div class="h-[25px] bg-[#eee] flex items-center"><span class="-ml-[17px] whitespace-nowrap">其它</span></div>
      <div class="h-[25px] flex items-center"><svg class="w-[16px] h-[16px] -ml-[1px] mr-[14px] shrink-0"><use href="#s-area"/></svg>建筑面积(U)</div>
      <div class="h-[25px] flex items-center"><svg class="w-[16px] h-[16px] -ml-[1px] mr-[14px] shrink-0"><use href="#s-level"/></svg>平整场地(V)</div>
      <div class="h-[25px] flex items-center"><svg class="w-[16px] h-[16px] -ml-[1px] mr-[14px] shrink-0"><use href="#s-apron"/></svg>散水(S)</div>
    </div>
    <div class="absolute left-[120px] top-[206px] w-[8px] h-[430px] rounded-full bg-[#c8c8c8]"></div>
  </div>

  <!-- 构件列表 + 属性列表 -->
  <div class="ml-[4px] w-[551px] h-full shrink-0 flex flex-col bg-white border-x border-[#d4d4d4]">
    <div class="h-[12px] bg-[#e8e8e8] shrink-0 relative"><span class="absolute right-[3px] top-[-1px] text-[#999] text-[13px]">✕</span></div>
    <div class="h-[23px] flex bg-[#f0f0f0] border-b border-[#d4d4d4] shrink-0">
      <div class="w-[65px] bg-white flex items-center justify-center font-bold border-r border-[#ccc]">构件列表</div>
      <div class="w-[65px] bg-[#e5e5e5] text-[#777] flex items-center justify-center border-r border-[#ccc]">图纸管理</div>
    </div>
    <div class="h-[27px] flex items-center text-[#333] shrink-0 whitespace-nowrap">
      <svg class="ml-[4px] w-[16px] h-[16px]"><use href="#new"/></svg><span class="ml-[4px]">新建</span><svg class="ml-[9px] w-[6px] h-[4px]"><use href="#caret"/></svg>
      <svg class="ml-[8px] w-[15px] h-[15px] text-[#444]"><use href="#copy"/></svg><span class="ml-[5px]">复制</span>
      <svg class="ml-[13px] w-[14px] h-[15px] text-[#444]"><use href="#del"/></svg><span class="ml-[5px]">删除</span>
      <svg class="ml-[12px] w-[15px] h-[15px] text-[#444]"><use href="#copy"/></svg><span class="ml-[5px]">层间复制</span>
      <svg class="ml-[12px] w-[15px] h-[15px] text-[#444]"><use href="#save"/></svg><span class="ml-[5px]">构件存盘</span>
      <svg class="ml-[13px] w-[15px] h-[15px]"><use href="#extract"/></svg><span class="ml-[4px]">构件提取</span>
      <svg class="ml-[14px] w-[15px] h-[15px]"><use href="#prefix"/></svg><span class="ml-[4px]">添加前后缀</span>
      <span class="ml-[33px] text-[#555]">»</span>
    </div>
    <div class="h-[20px] flex items-center pl-[2px] text-[#aaa] border-b border-[#ddd] shrink-0">搜索构件...</div>
    <div class="h-[211px] border-b border-[#d4d4d4] shrink-0 relative">
      <div class="flex items-center h-[21px] mt-[4px] pl-[13px]"><svg class="w-[6px] h-[4px] mr-[4px]"><use href="#caret"/></svg>桩承台</div>
      <div class="ml-[40px] mt-[2px] w-[70px] h-[21px] bg-[#c3daf3] rounded-[2px] flex items-center pl-[3px] whitespace-pre">ZCT-1  &lt;0&gt;</div>
    </div>
    <div class="h-[3px] bg-[#f0f0f0] shrink-0"></div>
    <div class="h-[14px] bg-[#e8e8e8] shrink-0"></div>
    <div class="h-[22px] flex bg-[#f0f0f0] border-b border-[#d4d4d4] shrink-0">
      <div class="w-[65px] bg-white flex items-center justify-center font-bold border-r border-[#ccc]">属性列表</div>
      <div class="w-[65px] bg-[#e5e5e5] text-[#777] flex items-center justify-center border-r border-[#ccc]">图层管理</div>
    </div>
    <div class="flex-1 grid grid-cols-[22px_101px_1fr] grid-rows-[repeat(11,21px)_1fr] text-[12px]">
      <div class="bg-[#f0f0f0] border-r border-b border-[#ddd]"></div><div class="flex items-center justify-center border-r border-b border-[#ddd]">属性名称</div><div class="flex items-center pl-[173px] border-b border-[#ddd] whitespace-nowrap">属性值</div>
      <div class="bg-[#f0f0f0] border-r border-b border-[#ddd] flex items-center justify-center">1</div><div class="flex items-center pl-[3px] border-r border-b border-[#ddd] text-[#2a5fe0]">名称</div><div class="flex items-center pl-[3px] border-b border-[#ddd]">ZCT-1</div>
      <div class="bg-[#f0f0f0] border-r border-b border-[#ddd] flex items-center justify-center">2</div><div class="flex items-center pl-[3px] border-r border-b border-[#ddd] text-[#2a5fe0]">长度(mm)</div><div class="flex items-center pl-[3px] border-b border-[#ddd] text-[#888]">0</div>
      <div class="bg-[#f0f0f0] border-r border-b border-[#ddd] flex items-center justify-center">3</div><div class="flex items-center pl-[3px] border-r border-b border-[#ddd] text-[#2a5fe0]">宽度(mm)</div><div class="flex items-center pl-[3px] border-b border-[#ddd] text-[#888]">0</div>
      <div class="bg-[#f0f0f0] border-r border-b border-[#ddd] flex items-center justify-center">4</div><div class="flex items-center pl-[3px] border-r border-b border-[#ddd] text-[#2a5fe0]">高度(mm)</div><div class="flex items-center pl-[3px] border-b border-[#ddd] text-[#888]">0</div>
      <div class="bg-[#f0f0f0] border-r border-b border-[#ddd] flex items-center justify-center">5</div><div class="flex items-center pl-[3px] border-r border-b border-[#ddd]">顶标高(m)</div><div class="flex items-center pl-[3px] border-b border-[#ddd]">层底标高</div>
      <div class="bg-[#f0f0f0] border-r border-b border-[#ddd] flex items-center justify-center">6</div><div class="flex items-center pl-[3px] border-r border-b border-[#ddd]">底标高(m)</div><div class="flex items-center pl-[3px] border-b border-[#ddd]">层底标高</div>
      <div class="bg-[#f0f0f0] border-r border-b border-[#ddd] flex items-center justify-center">7</div><div class="flex items-center pl-[3px] border-r border-b border-[#ddd]">备注</div><div class="border-b border-[#ddd]"></div>
      <div class="bg-[#f0f0f0] border-r border-b border-[#ddd] flex items-center justify-center">8</div><div class="flex items-center pl-[3px] border-r border-b border-[#ddd] whitespace-nowrap"><span class="w-[12px] h-[12px] mr-[6px] border border-[#888] bg-[#e8e8e8] rounded-[2px] flex items-center justify-center text-[10px]">+</span>钢筋业务属性</div><div class="border-b border-[#ddd]"></div>
      <div class="bg-[#f0f0f0] border-r border-b border-[#ddd] flex items-center justify-center">16</div><div class="flex items-center pl-[3px] border-r border-b border-[#ddd] whitespace-nowrap"><span class="w-[12px] h-[12px] mr-[6px] border border-[#888] rounded-[2px] flex items-center justify-center text-[10px]">+</span>土建业务属性</div><div class="border-b border-[#ddd]"></div>
      <div class="bg-[#f0f0f0] border-r border-b border-[#ddd] flex items-center justify-center">20</div><div class="flex items-center pl-[3px] border-r border-b border-[#ddd] whitespace-nowrap"><span class="w-[12px] h-[12px] mr-[6px] border border-[#888] rounded-[2px] flex items-center justify-center text-[10px]">+</span>显示样式</div><div class="border-b border-[#ddd]"></div>
      <div class="bg-[#f0f0f0] border-r border-[#ddd]"></div><div></div><div></div>
    </div>
  </div>

  <!-- 绘图区 -->
  <div class="ml-[2px] flex-1 h-full bg-black relative overflow-hidden">
    <svg class="block w-[1051px] h-[825px]" viewBox="690 150 1051 825" fill="none">
      <path d="M749 792V966M816 792V966M713 870H883M713 963H883" stroke="#0b620b"/>
      <path d="M883 792V966M883 870H960M883 963H960" stroke="#a00000"/>
      <path d="M1424 377H1456" stroke="#8a0000" stroke-width="1.500"/><path d="M1456 377V413" stroke="#e00000"/>
      <path d="M810 864l12 12M810 957l12 12M743 957l12 12" stroke="#0b620b"/>
      <path d="M702 859l8 3 3 8-3 8-8 3-8-3-3-8 3-8zM702 952l8 3 3 8-3 8-8 3-8-3-3-8 3-8z" stroke="#0b620b"/>
      <text x="702" y="876" font-size="16" fill="#fff" text-anchor="middle">B</text>
      <text x="702" y="969" font-size="16" fill="#fff" text-anchor="middle">A</text>
      <text transform="translate(790 817) rotate(-90)" font-size="18" fill="#eee" text-anchor="middle">2400</text>
      <text transform="translate(790 917) rotate(-90)" font-size="18" fill="#eee" text-anchor="middle">2100</text>
      <path d="M740 940V924" stroke="#00e000" stroke-width="5"/><path d="M735 925l5-12 5 12z" fill="#00e000"/>
      <path d="M745 943H760" stroke="#f00" stroke-width="5"/><path d="M758 937l12 6-12 6z" fill="#f00"/>
      <circle cx="740" cy="943" r="6" fill="#0000b0"/>
      <text x="740" y="913" font-size="14" fill="#00e000" text-anchor="middle">Y</text>
      <text x="776" y="949" font-size="15" fill="#f00" text-anchor="middle">X</text>
    </svg>
    <div class="absolute left-0 right-0 bottom-0 h-[9px] bg-[#2a2a2a]"></div>
  </div>
</div>

<!-- 顶部提示 + 搜索 -->
<div class="absolute left-[1220px] top-0 w-[196px] h-[30px] bg-[#0f8cf5] rounded-b-[4px] flex items-center pl-[7px] text-white">
  <span class="whitespace-nowrap">遇到问题，搜一搜</span>
  <span class="ml-[19px] w-[59px] h-[17px] bg-[#4aa8f5] rounded-[2px] flex items-center justify-center">立即尝试</span>
  <span class="absolute -right-[4px] top-[11px] w-0 h-0 border-y-[5px] border-y-transparent border-l-[4px] border-l-[#0f8cf5]"></span>
</div>
<div class="absolute left-[1426px] top-[7px] w-[315px] h-[16px] bg-white border border-[#ddd] rounded-[2px] flex items-center pl-[3px] text-[#aaa]">请输入功能名称或问题描述</div>

<!-- 选择参数化图形 -->
<div class="absolute left-[455px] top-[215px] w-[969px] h-[578px] bg-white border-t border-r border-[#ccc] shadow-[0_3px_10px_rgba(0,0,0,0.3)] text-[#333]">
  <div class="h-[40px] flex items-center pl-[11px] pb-[5px] relative"><span class="text-[13px]">选择参数化图形</span>
    <span class="absolute left-[917px] top-[14px] w-[10px] h-[10px] border border-[#666]"></span>
    <svg class="absolute left-[944px] top-[14px] w-[11px] h-[11px]" viewBox="0 0 11 11" stroke="#888" fill="none"><path d="M0 0l11 11M11 0L0 11"/></svg>
  </div>
  <div class="h-[26px] flex items-center pl-[11px]">
    <span class="w-[482px]">参数化截面类型:</span>
    <span class="w-[42px]">单位:</span><span class="w-[31px]">mm</span>
    <span class="w-[12px] h-[12px] rounded-full border border-[#888] flex items-center justify-center mr-[5px]"><i class="w-[7px] h-[7px] rounded-full bg-[#2a7fe0]"></i></span><span class="w-[79px]">角度放坡形式</span>
    <span class="w-[12px] h-[12px] rounded-full border border-[#888] mr-[4px]"></span><span class="w-[72px]">底宽放坡形式</span>
    <span class="ml-[127px] w-[80px] h-[26px] bg-[#2a7fe0] text-white rounded-[3px] flex items-center justify-center">配筋形式</span>
  </div>
  <div class="flex mt-[5px] pl-[11px] gap-[6px]">
    <div class="w-[476px] h-[461px] border border-[#ccc] flex relative overflow-hidden">
      <div class="w-[458px] ml-[1px] grid grid-cols-[152px_153px_153px] grid-rows-[153px_152px_153px]">
        <!-- 矩形承台 -->
        <div class="border-[3px] border-[#1890ff] outline outline-[2px] -outline-offset-[5px] outline-[#8ec5ff] flex items-center justify-center">
          <svg class="w-[140px] h-[140px] bg-[#6f93aa]" viewBox="0 0 140 140" fill="none">
            <rect x="26.500" y="22.500" width="110" height="55" stroke="#ff0"/>
            <svg x="67" y="42" width="22" height="14" viewBox="0 0 16 10" color="#fff"><use href="#hatch"/></svg>
            <path d="M13 22V78M8 22H23M8 78H23M26 91H137M26 87V96M137 87V96" stroke="#000"/>
            <text transform="translate(9 52) rotate(-90)" font-size="9" fill="#fff" class="font-['Liberation_Serif',serif]">A</text>
            <text x="81" y="87" font-size="10" fill="#fff" text-anchor="middle" class="font-['Liberation_Serif',serif]">B</text>
            <text x="84" y="113" font-size="14" fill="#3a2f8a" text-anchor="middle">矩形承台</text>
          </svg>
        </div>
        <!-- 三桩一 -->
        <div class="border-r border-b border-[#ddd] flex items-center justify-center">
          <svg class="w-[140px] h-[140px] bg-[#6f93aa]" viewBox="0 0 140 140" fill="none">
            <path d="M62 32H81L121 90L112 106H31L22 90Z" stroke="#ff0"/>
            <circle cx="71" cy="52" r="9.500" stroke="#fff"/><circle cx="47" cy="90" r="9.500" stroke="#fff"/><circle cx="95" cy="90" r="9.500" stroke="#fff"/>
            <svg x="63" y="71" width="16" height="10" viewBox="0 0 16 10" color="#fff"><use href="#hatch"/></svg>
            <path d="M62 24H81M62 21V27M81 21V27M129 32V106M125 32H132M125 53H132M125 90H132M125 106H132M13 118H129M26 114V122M31 114V122M48 114V122M96 114V122M112 114V122M117 114V122" stroke="#000"/>
            <text x="71" y="20" font-size="6" fill="#fff" text-anchor="middle">x4</text>
            <text x="17" y="116" font-size="6" fill="#fff">x1</text><text x="36" y="116" font-size="6" fill="#fff">x2</text><text x="68" y="116" font-size="6" fill="#fff">x3</text><text x="100" y="116" font-size="6" fill="#fff">x2</text><text x="119" y="116" font-size="6" fill="#fff">x1</text>
            <text transform="translate(125 46) rotate(-90)" font-size="6" fill="#fff">y3</text><text transform="translate(125 76) rotate(-90)" font-size="6" fill="#fff">y2</text><text transform="translate(125 103) rotate(-90)" font-size="6" fill="#fff">y1</text>
            <text x="73" y="132" font-size="10" fill="#3a2f8a" text-anchor="middle">三桩承台一</text>
          </svg>
        </div>
        <!-- 三桩二 -->
        <div class="border-r border-b border-[#ddd] flex items-center justify-center">
          <svg class="w-[140px] h-[140px] bg-[#6f93aa]" viewBox="0 0 140 140" fill="none">
            <path d="M60 29H79L119 87L110 103H29L20 87Z" stroke="#ff0"/>
            <circle cx="69" cy="49" r="9.500" stroke="#fff"/><circle cx="45" cy="87" r="9.500" stroke="#fff"/><circle cx="93" cy="87" r="9.500" stroke="#fff"/>
            <svg x="62" y="66" width="16" height="10" viewBox="0 0 16 10" color="#fff"><use href="#hatch"/></svg>
            <path d="M60 21H79M60 18V24M79 18V24M127 29V103M123 29H130M123 50H130M123 87H130M123 103H130M11 114H127M24 110V118M29 110V118M46 110V118M94 110V118M110 110V118M115 110V118" stroke="#000"/>
            <text x="68" y="17" font-size="6" fill="#fff" text-anchor="middle">x4</text>
            <text x="15" y="112" font-size="6" fill="#fff">x1</text><text x="34" y="112" font-size="6" fill="#fff">x2</text><text x="64" y="112" font-size="6" fill="#fff">x3</text><text x="98" y="112" font-size="6" fill="#fff">x2</text><text x="117" y="112" font-size="6" fill="#fff">x1</text>
            <text transform="translate(123 43) rotate(-90)" font-size="6" fill="#fff">y3</text><text transform="translate(123 73) rotate(-90)" font-size="6" fill="#fff">y2</text><text transform="translate(123 100) rotate(-90)" font-size="6" fill="#fff">y1</text>
            <text x="71" y="128" font-size="10" fill="#3a2f8a" text-anchor="middle">三桩承台二</text>
          </svg>
        </div>
        <!-- 阶式四桩台 -->
        <div class="border-r border-b border-[#ddd] flex items-center justify-center">
          <svg class="w-[140px] h-[140px] bg-[#6f93aa]" viewBox="0 0 140 140" fill="none">
            <text x="70" y="28" font-size="20" fill="#434a92" text-anchor="middle" letter-spacing="1">阶式四桩台</text>
            <rect x="44.500" y="45.500" width="64" height="64" stroke="#b5b54a"/>
            <svg x="71" y="70" width="10" height="15" viewBox="0 0 16 10" preserveAspectRatio="none" color="#b5b54a"><use href="#hatch"/></svg>
            <path d="M33 45V110M27 45H41M27 110H41M44 119H108M44 113V125M108 113V125" stroke="#333"/>
            <text x="22" y="80" font-size="15" fill="#fff" text-anchor="middle" class="font-['Liberation_Serif',serif]">A</text>
            <text x="78" y="135" font-size="15" fill="#fff" text-anchor="middle" class="font-['Liberation_Serif',serif]">A</text>
          </svg>
        </div>
        <!-- 阶式五桩台 -->
        <div class="border-r border-b border-[#ddd] flex items-center justify-center">
          <svg class="w-[140px] h-[140px] bg-[#6f93aa]" viewBox="0 0 140 140" fill="none">
            <text x="70" y="28" font-size="20" fill="#434a92" text-anchor="middle" letter-spacing="1">阶式五桩台</text>
            <path d="M83 43L119 68L105 107H61L47 68Z" stroke="#b5b54a"/>
            <svg x="75" y="71" width="16" height="9" viewBox="0 0 16 10" color="#b5b54a"><use href="#hatch"/></svg>
            <path d="M40 43V108M34 43H48M34 108H48M61 117H105M61 111V122M105 111V122" stroke="#333"/>
            <text transform="translate(31 78) rotate(-90)" font-size="14" fill="#fff" class="font-['Liberation_Serif',serif]">A:</text>
            <text x="88" y="132" font-size="13" fill="#fff" text-anchor="middle" class="font-['Liberation_Mono',monospace]">B=A/1.5385</text>
          </svg>
        </div>
        <!-- 阶式六桩台 -->
        <div class="border-r border-b border-[#ddd] flex items-center justify-center">
          <svg class="w-[140px] h-[140px] bg-[#6f93aa]" viewBox="0 0 140 140" fill="none">
            <text x="70" y="28" font-size="20" fill="#434a92" text-anchor="middle" letter-spacing="1">阶式六桩台</text>
            <path d="M69 43H105L124 76L105 107H69L50 76Z" stroke="#b5b54a"/>
            <svg x="80" y="70" width="15" height="9" viewBox="0 0 16 10" color="#b5b54a"><use href="#hatch"/></svg>
            <path d="M46 43V107M40 43H54M40 107H54M69 116H105M69 110V121M105 110V121" stroke="#333"/>
            <text transform="translate(36 76) rotate(-90)" font-size="14" fill="#fff" class="font-['Liberation_Serif',serif]">A:</text>
            <text x="90" y="132" font-size="13" fill="#fff" text-anchor="middle" class="font-['Liberation_Mono',monospace]">B=A/1.7326</text>
          </svg>
        </div>
        <!-- 不等边一 -->
        <div class="border-r border-b border-[#ddd] flex items-center justify-center">
          <svg class="w-[140px] h-[140px] bg-[#6f93aa]" viewBox="0 0 140 140" fill="none">
            <path d="M72 25H90L130 83V109H31V83Z" stroke="#ff0"/>
            <circle cx="81" cy="46" r="9.500" stroke="#fff"/><circle cx="57" cy="93" r="9.500" stroke="#fff"/><circle cx="105" cy="93" r="9.500" stroke="#fff"/>
            <svg x="73" y="68" width="16" height="10" viewBox="0 0 16 10" color="#fff"><use href="#hatch"/></svg>
            <path d="M72 19H90M72 16V22M90 16V22M24 25V109M20 25H29M20 46H29M20 83H29M20 93H29M20 109H29M31 119H130M31 114V123M58 114V123M81 114V123M105 114V123M130 114V123" stroke="#000"/>
            <text x="80" y="17" font-size="6" fill="#fff" text-anchor="middle">x5</text>
            <text x="40" y="117" font-size="6" fill="#fff">x1</text><text x="64" y="117" font-size="6" fill="#fff">x2</text><text x="88" y="117" font-size="6" fill="#fff">x2</text><text x="112" y="117" font-size="6" fill="#fff">x1</text>
            <text transform="translate(19 41) rotate(-90)" font-size="6" fill="#fff">y4</text><text transform="translate(19 69) rotate(-90)" font-size="6" fill="#fff">y3</text><text transform="translate(19 90) rotate(-90)" font-size="6" fill="#fff">y2</text><text transform="translate(19 107) rotate(-90)" font-size="6" fill="#fff">y1</text>
            <text x="84" y="134" font-size="10" fill="#3a2f8a" text-anchor="middle">不等边承台一</text>
          </svg>
        </div>
        <!-- 不等边二 -->
        <div class="border-r border-b border-[#ddd] flex items-center justify-center">
          <svg class="w-[140px] h-[140px] bg-[#6f93aa]" viewBox="0 0 140 140" fill="none">
            <path d="M51 23H65L125 62V86H22V66Z" stroke="#ff0"/>
            <circle cx="61" cy="38" r="7.500" stroke="#fff"/><circle cx="40" cy="74" r="7.500" stroke="#fff"/><circle cx="107" cy="74" r="7.500" stroke="#fff"/>
            <svg x="58" y="55" width="11" height="7" viewBox="0 0 16 10" color="#fff"><use href="#hatch"/></svg>
            <path d="M34 17H72M52 14V20M62 14V20M14 23V86M11 23H18M11 38H18M11 66H18M11 75H18M11 86H18M22 93H125M22 89V97M40 89V97M62 89V97M107 89V97M125 89V97M136 62V74M130 62H137M130 74H137" stroke="#000"/>
            <text x="37" y="15" font-size="6" fill="#fff">x5</text><text x="66" y="15" font-size="6" fill="#fff">x6</text>
            <text x="27" y="91" font-size="6" fill="#fff">x1</text><text x="47" y="91" font-size="6" fill="#fff">x2</text><text x="81" y="91" font-size="6" fill="#fff">x3</text><text x="112" y="91" font-size="6" fill="#fff">x4</text>
            <text transform="translate(10 35) rotate(-90)" font-size="6" fill="#fff">y4</text><text transform="translate(10 57) rotate(-90)" font-size="6" fill="#fff">y3</text><text transform="translate(10 84) rotate(-90)" font-size="6" fill="#fff">y1</text>
            <text x="78" y="114" font-size="11" fill="#3a2f8a" text-anchor="middle">不等边承台二</text>
          </svg>
        </div>
        <!-- 不等边三 -->
        <div class="border-r border-b border-[#ddd] flex items-center justify-center">
          <svg class="w-[140px] h-[140px] bg-[#6f93aa]" viewBox="0 0 140 140" fill="none">
            <path d="M70 24H88L128 82V108H29V82Z" stroke="#ff0"/>
            <circle cx="79" cy="45" r="9.500" stroke="#fff"/><circle cx="55" cy="92" r="9.500" stroke="#fff"/><circle cx="103" cy="92" r="9.500" stroke="#fff"/>
            <svg x="71" y="66" width="16" height="10" viewBox="0 0 16 10" color="#fff"><use href="#hatch"/></svg>
            <path d="M70 18H88M70 15V21M88 15V21M22 24V108M18 24H27M18 45H27M18 82H27M18 92H27M18 108H27M29 118H128M29 113V122M56 113V122M79 113V122M103 113V122M128 113V122" stroke="#000"/>
            <text x="78" y="16" font-size="6" fill="#fff" text-anchor="middle">x5</text>
            <text x="38" y="116" font-size="6" fill="#fff">x1</text><text x="62" y="116" font-size="6" fill="#fff">x2</text><text x="86" y="116" font-size="6" fill="#fff">x2</text><text x="110" y="116" font-size="6" fill="#fff">x1</text>
            <text transform="translate(17 40) rotate(-90)" font-size="6" fill="#fff">y4</text><text transform="translate(17 68) rotate(-90)" font-size="6" fill="#fff">y3</text><text transform="translate(17 89) rotate(-90)" font-size="6" fill="#fff">y2</text><text transform="translate(17 106) rotate(-90)" font-size="6" fill="#fff">y1</text>
            <text x="76" y="133" font-size="10" fill="#3a2f8a" text-anchor="middle">不等边承台三</text>
          </svg>
        </div>
      </div>
      <div class="absolute left-[463px] top-[14px] w-[8px] h-[216px] rounded-full bg-[#c8c8c8]"></div>
    </div>
    <div class="w-[464px] h-[461px] bg-black"></div>
  </div>
</div>

<!-- 配筋形式 -->
<div class="absolute left-[954px] top-[413px] w-[702px] h-[562px] bg-[#e4e4e3] bg-linear-to-r from-[#e4e4e3] via-[#ececec] to-[#e4e4e3] border-t border-x border-[#c4c4c4] shadow-[0_2px_10px_rgba(0,0,0,0.35)] text-[#333]">
  <div class="h-[39px] flex items-center pl-[11px] pb-[4px] relative"><span class="text-[13px] text-[#444]">配筋形式</span>
    <svg class="absolute left-[677px] top-[14px] w-[11px] h-[11px]" viewBox="0 0 11 11" stroke="#888" fill="none"><path d="M0 0l11 11M11 0L0 11"/></svg>
  </div>
  <div class="ml-[11px] w-[678px] h-[496px] border border-[#888] bg-white flex relative overflow-hidden">
    <div class="w-[661px] h-full bg-[#f6f6f6] pl-[9px] pt-[4px]">
      <div class="grid grid-cols-[317px_317px] gap-x-[6px] gap-y-[6px]">
        <!-- 全部翻起 -->
        <svg class="block w-[317px] h-[238px] bg-black" viewBox="0 0 317 238" fill="none">
          <path d="M63 61H264M63 55V70M264 55V70M156 61V15M177 61V15M150 15H165l2-3-2 7 2-4H182" stroke="#fff"/>
          <path d="M64 65H75L98 101H230L253 65H263M103 83V65H226V83" stroke="#f00" stroke-width="2"/>
          <path d="M75 67L103 113M78 113H225L256 67M151 146V105H172V146M145 146H160l2-3-2 7 2-4H177M57 61V113M52 61H62M52 113H62M64 77H80" stroke="#fff"/>
          <path d="M117 61V47M117 87V101M210 62l6-14M217 62l6-14M223 62l6-14M230 62l6-14M205 48H240M178 101l6-10M186 101l6-10M194 101l6-10M175 91H202" stroke="#fff"/>
          <text x="91" y="51" font-size="9" fill="#fff">横向面筋</text><text x="125" y="51" font-size="8" fill="#0f0">XMJ</text>
          <text x="181" y="51" font-size="9" fill="#fff">纵向面筋</text><text x="216" y="51" font-size="8" fill="#0f0">YMJ</text>
          <text x="108" y="90" font-size="9" fill="#fff">横向底筋</text><text x="143" y="90" font-size="8" fill="#0f0">XDJ</text>
          <text x="161" y="94" font-size="9" fill="#fff">纵向底筋</text><text x="198" y="94" font-size="8" fill="#0f0">YDJ</text>
          <text x="248" y="93" font-size="8" fill="#0f0">CMJ</text>
          <text transform="translate(95 83) rotate(-90)" font-size="7" fill="#0f0">LWZ</text>
          <text transform="translate(60 90) rotate(-90)" font-size="8" fill="#0f0">h</text>
          <text transform="translate(91 108) rotate(-60)" font-size="7" fill="#0f0">PDJ</text>
          <text transform="translate(188 117) rotate(90)" font-size="7" fill="#0f0">BSC</text>
          <text transform="translate(243 76) rotate(-58)" font-size="8" fill="#fff">弯折长度</text>
          <path d="M64 127H75L98 163H230L253 127H263" stroke="#f0000f" stroke-width="2"/>
          <text x="164" y="202" font-size="20" fill="#eee" text-anchor="middle">全部翻起</text>
          <text x="163" y="226" font-size="18" fill="#eee" text-anchor="middle" letter-spacing="2">1-1</text>
          <path d="M139 229H178" stroke="#fff"/>
        </svg>
        <!-- 梁式配筋承台 -->
        <svg class="block w-[317px] h-[238px] bg-black" viewBox="0 0 317 238" fill="none">
          <path d="M59 29H245M59 24V38M245 24V38" stroke="#fff"/>
          <path d="M59 33H70L93 69M93 70H114M189 70H211M211 69L235 33H245" stroke="#f0f" stroke-width="1.500"/>
          <path d="M96 51V33H211V51" stroke="#0f0" stroke-width="1.500"/>
          <path d="M96 51V68H211V51" stroke="#ff0" stroke-width="1.500"/>
          <path d="M96 42H211M96 47H211M96 53H211" stroke="#0ff" stroke-width="1.500"/>
          <path d="M148 33V68M153 33V68M159 33V68M165 33V68M170 33V68M176 33V68" stroke="#f00" stroke-width="1.500"/>
          <path d="M75 78L96 78H240M68 33L96 78M213 78L237 38M141 70V98M161 70V98M135 98H149l2-3-2 7 2-4H164M109 30V15H120M59 44H75M226 44H245" stroke="#fff"/>
          <text x="88" y="18" font-size="8" fill="#fff">上部筋</text><text x="115" y="18" font-size="7" fill="#0f0">SBJ</text>
          <text x="105" y="62" font-size="8" fill="#fff">侧面筋</text><text x="128" y="62" font-size="7" fill="#0f0">CGJ</text>
          <text x="177" y="62" font-size="8" fill="#fff">箍筋</text><text x="193" y="62" font-size="7" fill="#0f0">GJ</text>
          <text x="221" y="72" font-size="7" fill="#0f0">BPJ</text>
          <text x="126" y="89" font-size="8" fill="#fff">下部筋</text><text x="150" y="89" font-size="7" fill="#0f0">XBJ</text>
          <text x="149" y="118" font-size="16" fill="#eee" text-anchor="middle" letter-spacing="2">1-1</text>
          <path d="M130 123H166" stroke="#fff"/>
          <text transform="translate(222 44) rotate(-58)" font-size="8" fill="#fff">弯折长度</text>
          <path d="M87 133H230M87 128V140M230 128V140" stroke="#fff"/>
          <path d="M88 135H98L122 173H196L219 135H230" stroke="#f0f" stroke-width="1.500"/>
          <path d="M122 135V171M132 135V171M141 135V171M152 135V171M161 135V171M174 135V171M183 135V171M195 135V171M122 135H195M122 150H195M122 159H195M122 170H195" stroke="#f00" stroke-width="1.500"/>
          <path d="M121 181H194M148 172V201M168 172V201M142 201H156l2-3-2 7 2-4H171M82 134V181M77 134H87M77 181H87M169 123V170" stroke="#fff"/>
          <text x="169" y="126" font-size="8" fill="#fff">拉筋</text><text x="186" y="126" font-size="7" fill="#0f0">LJ</text>
          <text x="87" y="160" font-size="8" fill="#fff">斜面筋</text><text x="88" y="169" font-size="7" fill="#0f0">XMJ</text>
          <text x="215" y="162" font-size="7" fill="#0f0">XMSJ</text><text x="127" y="190" font-size="7" fill="#0f0">XVZ</text>
          <text transform="translate(85 160) rotate(-90)" font-size="8" fill="#0f0">h</text>
          <text transform="translate(207 141) rotate(-58)" font-size="8" fill="#fff">弯折长度</text>
          <text x="157" y="226" font-size="18" fill="#eee" text-anchor="middle" letter-spacing="2">2-2</text>
          <path d="M138 229H174" stroke="#fff"/>
          <text x="175" y="218" font-size="15" fill="#eee" letter-spacing="1">梁式配筋承台</text>
        </svg>
        <!-- 环式配筋承台 -->
        <svg class="block w-[317px] h-[236px] bg-black" viewBox="0 0 317 236" fill="none">
          <rect x="1.500" y="1.500" width="314" height="233" stroke="#2a7bd5" stroke-width="3"/>
          <path d="M58 69H141L108 136H24Z" stroke="#ff0" stroke-width="1.500"/>
          <path d="M130 78l9-8M133 81l8-8" stroke="#ff0" stroke-width="1.500"/>
          <rect x="40.500" y="82.500" width="86" height="47" stroke="#f0f" stroke-width="1.500"/>
          <path d="M117 90l5-5M121 92l5-5" stroke="#f0f"/>
          <path d="M97 58V126M64 118V187M64 120H75M64 123H75" stroke="#0ff" stroke-width="1.500"/>
          <path d="M97 58L64 118M97 126L64 187" stroke="#0ff"/>
          <path d="M160.500 43.500H296.500V140.500H160.500ZM215 128H243M215 128V183M243 128V183M208 183H221l2-4-1 8 2-4H249M146 43V140M138 43H154M138 140H154M253 128V142M247 128H258M189 50V24H204M167 65L176 62V102L167 106" stroke="#fff"/>
          <path d="M191 47l5-12M198 47l5-12M206 47l5-12M213 47l5-12M220 47l5-12M196 35H274" stroke="#fff"/>
          <rect x="165.500" y="47.500" width="126" height="77" stroke="#f0f" stroke-width="1.500"/>
          <path d="M172 47h1M186 47h1M200 47h1M214 47h1M228 47h1M242 47h1M256 47h1M270 47h1M172 124h1M186 124h1M200 124h1M214 124h1M228 124h1M242 124h1M256 124h1M270 124h1" stroke="#0ff" stroke-width="3"/>
          <path d="M165 58h1M165 69h1M165 80h1M165 91h1M165 102h1M165 113h1M291 58h1M291 69h1M291 80h1M291 91h1M291 102h1M291 113h1" stroke="#ff0" stroke-width="3"/>
          <path d="M284 54l5-5M288 56l4-4" stroke="#f0f"/>
          <text x="175" y="21" font-size="11" fill="#fff">横向钢筋</text><text x="219" y="21" font-size="8" fill="#0f0">XGJ</text>
          <text x="229" y="31" font-size="11" fill="#fff">纵向钢筋</text><text x="272" y="31" font-size="8" fill="#0f0">YGJ</text>
          <text transform="translate(188 106) rotate(-90)" font-size="11" fill="#fff">侧面钢筋</text>
          <text transform="translate(202 105) rotate(-90)" font-size="8" fill="#0f0">CGJ</text>
          <text transform="translate(149 95) rotate(-90)" font-size="9" fill="#0f0">h</text>
          <text transform="translate(259 127) rotate(90)" font-size="8" fill="#0f0">BSC</text>
          <text x="138" y="197" font-size="22" fill="#eee" text-anchor="middle">环式配筋承台</text>
          <text x="164" y="223" font-size="20" fill="#eee" text-anchor="middle" letter-spacing="3">1-1</text>
          <path d="M137 227H187" stroke="#fff"/>
        </svg>
      </div>
    </div>
    <div class="absolute left-[665px] top-[246px] w-[8px] h-[234px] rounded-full bg-[#ccc]"></div>
  </div>
  <div class="flex justify-end gap-[6px] mt-[6px] mr-[12px]">
    <span class="w-[78px] h-[30px] bg-[#2a7fe0] text-white rounded-[3px] flex items-center justify-center">确定</span>
    <span class="w-[77px] h-[30px] bg-white border border-[#ccc] rounded-[3px] flex items-center justify-center">取消</span>
  </div>
</div>

<!-- 红框标注 -->
<div class="absolute left-[972px] top-[709px] w-[362px] h-[185px] border-[3px] border-[#ff2015] rounded-[3px]"></div>
</body>
</html>
